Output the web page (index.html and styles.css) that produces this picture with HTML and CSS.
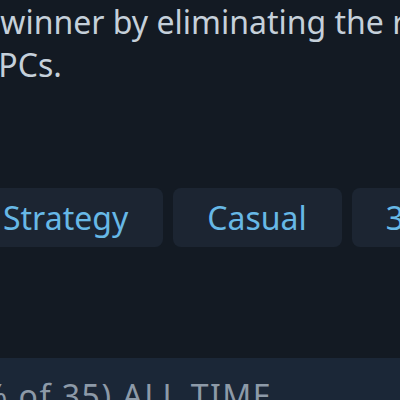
FILE: index.html
```html
<!DOCTYPE html>
<html lang="en">
<head>
    <meta charset="UTF-8">
    <meta name="viewport" content="width=device-width, initial-scale=1.0">
    <title>Game details</title>
    <link rel="stylesheet" href="styles.css">
</head>
<body>
    <div class="page">
        <!-- description -->
        <p class="desc">a winner by eliminating the rest<br>NPCs.</p>

        <!-- tags -->
        <div class="tags">
            <span class="tag">Strategy</span>
            <span class="tag">Casual</span>
            <span class="tag">3D</span>
        </div>

        <!-- reviews -->
        <div class="reviews">
            <div class="reviews-title">(97% of 35) ALL TIME</div>
        </div>
    </div>
</body>
</html>
```

FILE: styles.css
```css
html, body {
    margin: 0;
    padding: 0;
    height: 100%;
    overflow: hidden;
    background-color: #131a23;
    font-family: "Noto Sans", "Open Sans", sans-serif;
}

.page {
    display: flex;
    flex-direction: column;
}

.desc {
    margin: 0 0 0 -26px;
    font-size: 32px;
    line-height: 43px;
    color: #c5d0da;
    white-space: nowrap;
}

.tags {
    display: flex;
    gap: 10px;
    margin-top: 102px;
    margin-left: -31px;
    white-space: nowrap;
}

.tag {
    display: flex;
    align-items: center;
    height: 59px;
    padding: 0 35px 0 34px;
    background-color: #1c2532;
    border-radius: 8px;
    color: #67b8e6;
    font-size: 32px;
}

.reviews {
    margin-top: 111px;
    background-color: #1b2737;
    height: 100px;
}

.reviews-title {
    margin-left: -70px;
    padding-top: 16px;
    font-size: 32px;
    letter-spacing: 1.5px;
    color: #8d9aa8;
    white-space: nowrap;
}
```
